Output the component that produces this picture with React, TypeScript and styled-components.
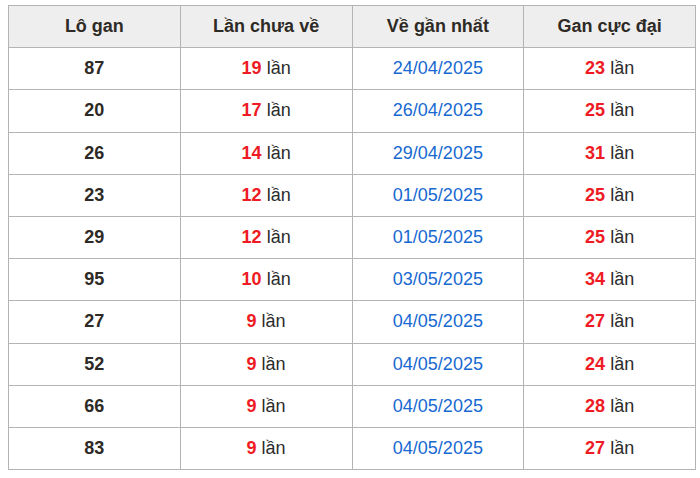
import React from 'react';
import styled, { createGlobalStyle } from 'styled-components';

const GlobalStyle = createGlobalStyle`
  html, body {
    margin: 0;
    padding: 0;
    background: #fff;
  }
  body {
    font-family: "Liberation Sans", Arial, sans-serif;
  }
`;

const Wrapper = styled.div`
  padding: 5px 5px 0 8px;
`;

const Table = styled.table`
  width: 688px;
  border-collapse: collapse;
  table-layout: fixed;
  border: 1px solid #b4b4b4;
  font-size: 18px;
  color: #2b2b2b;
`;

const HeadCell = styled.th`
  height: 41.2px;
  background: #eeeeee;
  border: 1px solid #b4b4b4;
  font-weight: bold;
  text-align: center;
  color: #2e2a25;
  padding: 0;
`;

const Cell = styled.td`
  height: 41.2px;
  border: 1px solid #b4b4b4;
  text-align: center;
  padding: 0;
`;

const Num = styled.span`
  font-weight: bold;
  color: #2e2a25;
`;

const Red = styled.span`
  font-weight: bold;
  color: #ee1b24;
`;

const Date = styled.span`
  color: #1769d1;
`;

const rows: [string, number, string, number][] = [
  ['87', 19, '24/04/2025', 23],
  ['20', 17, '26/04/2025', 25],
  ['26', 14, '29/04/2025', 31],
  ['23', 12, '01/05/2025', 25],
  ['29', 12, '01/05/2025', 25],
  ['95', 10, '03/05/2025', 34],
  ['27', 9, '04/05/2025', 27],
  ['52', 9, '04/05/2025', 24],
  ['66', 9, '04/05/2025', 28],
  ['83', 9, '04/05/2025', 27],
];

const App: React.FC = () => {
  return (
    <Wrapper>
      <GlobalStyle />
      <Table>
        <thead>
          <tr>
            <HeadCell>Lô gan</HeadCell>
            <HeadCell>Lần chưa về</HeadCell>
            <HeadCell>Về gần nhất</HeadCell>
            <HeadCell>Gan cực đại</HeadCell>
          </tr>
        </thead>
        <tbody>
          {rows.map(([lo, chua, ngay, max]) => (
            <tr key={lo}>
              <Cell><Num>{lo}</Num></Cell>
              <Cell><Red>{chua}</Red> lần</Cell>
              <Cell><Date>{ngay}</Date></Cell>
              <Cell><Red>{max}</Red> lần</Cell>
            </tr>
          ))}
        </tbody>
      </Table>
    </Wrapper>
  );
};

export default App;
